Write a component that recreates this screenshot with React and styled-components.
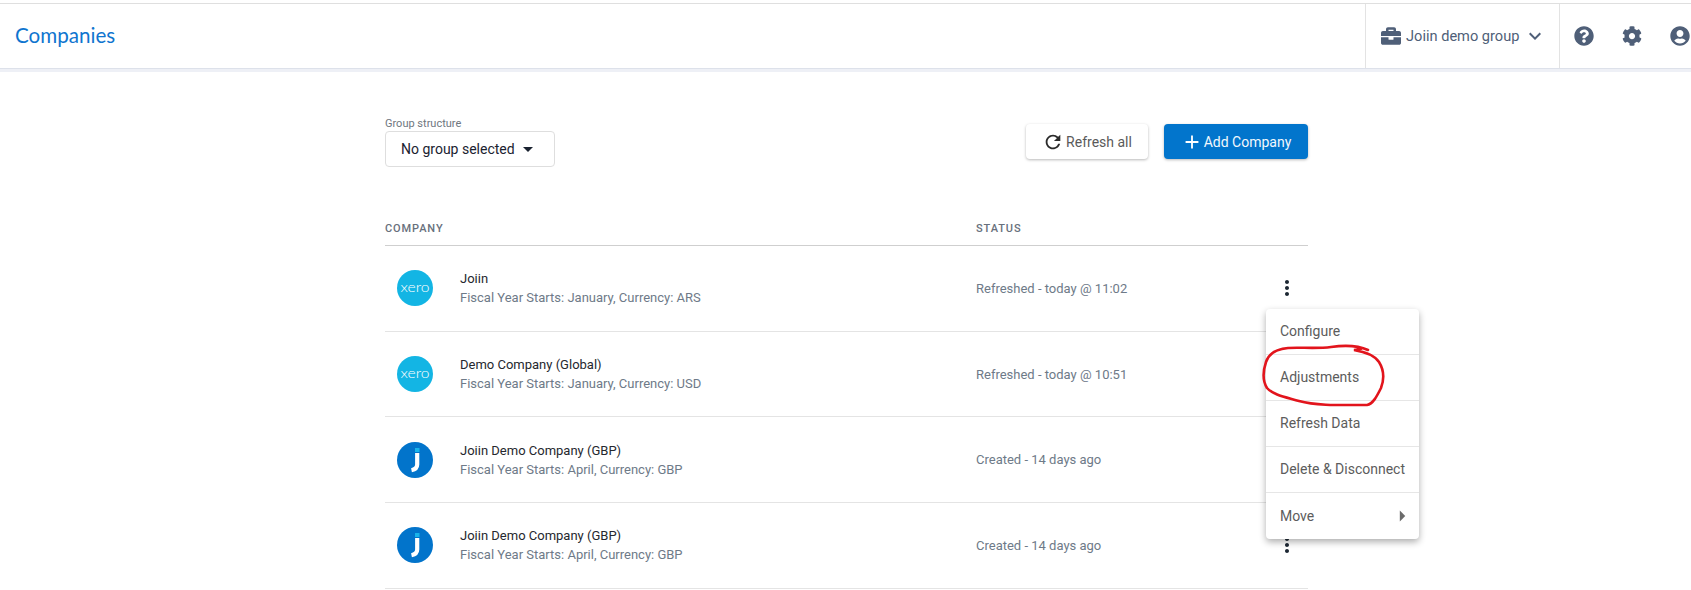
import React from "react";
import styled, { createGlobalStyle } from "styled-components";
import { FaBriefcase, FaQuestionCircle, FaCog, FaUserCircle } from "react-icons/fa";
import { MdRefresh, MdAdd, MdArrowDropDown, MdMoreVert, MdArrowRight, MdKeyboardArrowDown } from "react-icons/md";

const GlobalStyle = createGlobalStyle`
  html, body {
    margin: 0;
    height: 590px;
    overflow: hidden;
    background: #fff;
    font-family: Roboto, "Liberation Sans", sans-serif;
  }
`;

const Page = styled.div`
  height: 590px;
  padding-top: 3px;
  box-sizing: border-box;
  overflow: hidden;
`;

const Header = styled.header`
  height: 66px;
  box-sizing: border-box;
  display: flex;
  align-items: stretch;
  justify-content: space-between;
  border-top: 1px solid #dfdfdf;
  border-bottom: 1px solid #dde1ea;
  box-shadow: 0 3px 0 #eef0f6;
`;

const Title = styled.div`
  display: flex;
  align-items: center;
  padding-left: 15px;
  padding-bottom: 2px;
  font-family: Lato, sans-serif;
  font-size: 20.6px;
  color: #0f75cf;
`;

const HeaderRight = styled.div`
  display: flex;
  align-items: stretch;
`;

const GroupPicker = styled.div`
  width: 195px;
  box-sizing: border-box;
  display: flex;
  align-items: center;
  padding-left: 15px;
  border-left: 1px solid #e3e3e3;
  border-right: 1px solid #e3e3e3;
  color: #4f5f78;
  font-size: 14.6px;

  span {
    margin-left: 5px;
    margin-right: 4px;
  }
`;

const HeaderIcons = styled.div`
  width: 131px;
  display: flex;
  align-items: center;
  gap: 28px;
  padding-left: 14px;
  box-sizing: border-box;
  color: #4f5f78;
`;

const Main = styled.main`
  position: relative;
  width: 923px;
  margin-left: 385px;
`;

const Toolbar = styled.div`
  height: 103px;
  padding-top: 48px;
  box-sizing: border-box;
  display: flex;
  justify-content: space-between;
  align-items: flex-start;
`;

const SelectLabel = styled.div`
  font-size: 11px;
  line-height: 13px;
  color: #6f7780;
  margin-bottom: 1px;
`;

const Select = styled.div`
  width: 170px;
  height: 36px;
  box-sizing: border-box;
  display: flex;
  align-items: center;
  padding-left: 15px;
  border: 1px solid #dedede;
  border-radius: 4px;
  font-size: 14px;
  color: #1a2230;

  svg {
    margin-left: 1px;
  }
`;

const Buttons = styled.div`
  display: flex;
  gap: 16px;
  padding-top: 7px;
`;

const Button = styled.button`
  height: 35px;
  width: ${(p) => p.$width}px;
  display: flex;
  align-items: center;
  justify-content: center;
  gap: ${(p) => (p.$primary ? 1 : 2)}px;
  border: none;
  border-radius: 4px;
  padding: 0;
  font-family: inherit;
  font-size: 14px;
  background: ${(p) => (p.$primary ? "#0275cc" : "#fff")};
  color: ${(p) => (p.$primary ? "#f2f8fd" : "#5a5a5a")};
  box-shadow: 0 1px 3px rgba(0, 0, 0, 0.28);

  svg {
    color: ${(p) => (p.$primary ? "#fff" : "#2b2b2b")};
  }
`;

const TableHead = styled.div`
  height: 74px;
  box-sizing: border-box;
  display: grid;
  grid-template-columns: 591px 1fr;
  align-items: end;
  padding-bottom: 10px;
  border-bottom: 1px solid #cfcfcf;
  font-size: 11px;
  line-height: 13px;
  font-weight: 500;
  letter-spacing: 0.9px;
  color: #68707c;
`;

const Row = styled.div`
  height: 85.7px;
  box-sizing: border-box;
  display: grid;
  grid-template-columns: 75px 516px 1fr 33px;
  align-items: center;
  border-bottom: 1px solid #e4e4e4;
`;

const LogoCell = styled.div`
  padding-left: 12px;
  display: flex;
`;

const CompanyName = styled.div`
  font-size: 13px;
  line-height: 19px;
  color: #25282e;
`;

const CompanySub = styled.div`
  font-size: 13px;
  line-height: 19px;
  color: #6e7a88;
`;

const Status = styled.div`
  font-size: 13px;
  color: #6e7a88;
`;

const Kebab = styled.div`
  display: flex;
  justify-content: flex-start;
  color: #1c2733;
`;

const Menu = styled.div`
  position: absolute;
  left: 881px;
  top: 240px;
  width: 153px;
  background: #fff;
  border-radius: 4px;
  box-shadow: 0 3px 7px rgba(0, 0, 0, 0.32);
`;

const MenuItem = styled.div`
  height: 46px;
  box-sizing: border-box;
  display: flex;
  align-items: center;
  justify-content: space-between;
  padding: 0 9px 1px 14px;
  font-size: 14px;
  color: #5c5c5c;
  border-bottom: ${(p) => (p.$last ? "none" : "1px solid #e6e6e6")};

  svg {
    color: #6b6b6b;
    margin-right: -5px;
  }
`;

const Scribble = styled.svg`
  position: absolute;
  left: -5px;
  top: 35px;
  pointer-events: none;
`;

const XeroLogo = () => (
  <svg width="36" height="36" viewBox="0 0 36 36">
    <circle cx="18" cy="18" r="18" fill="#13b5e4" />
    <text x="18" y="22" textAnchor="middle" textLength="29" lengthAdjust="spacingAndGlyphs" fontFamily="Lato, sans-serif" fontWeight="300" fontSize="14" fill="#fff">xero</text>
  </svg>
);

const JoiinLogo = () => (
  <svg width="36" height="36" viewBox="0 0 36 36">
    <circle cx="18" cy="18" r="18" fill="#0274cb" />
    <rect x="18" y="6" width="4.5" height="4" fill="#19b4ea" />
    <path d="M20.2 11 V22.5 C20.2 26 18 27.5 14.5 28.2" fill="none" stroke="#fff" strokeWidth="4.2" />
  </svg>
);

const companies = [
  { name: "Joiin", sub: "Fiscal Year Starts: January, Currency: ARS", status: "Refreshed - today @ 11:02", logo: "xero" },
  { name: "Demo Company (Global)", sub: "Fiscal Year Starts: January, Currency: USD", status: "Refreshed - today @ 10:51", logo: "xero" },
  { name: "Joiin Demo Company (GBP)", sub: "Fiscal Year Starts: April, Currency: GBP", status: "Created - 14 days ago", logo: "joiin" },
  { name: "Joiin Demo Company (GBP)", sub: "Fiscal Year Starts: April, Currency: GBP", status: "Created - 14 days ago", logo: "joiin" },
];

const menuItems = ["Configure", "Adjustments", "Refresh Data", "Delete & Disconnect"];

export default function App() {
  return (
    <Page>
      <GlobalStyle />
      <Header>
        <Title>Companies</Title>
        <HeaderRight>
          <GroupPicker>
            <FaBriefcase size={20} />
            <span>Joiin demo group</span>
            <MdKeyboardArrowDown size={24} />
          </GroupPicker>
          <HeaderIcons>
            <FaQuestionCircle size={20} />
            <FaCog size={20} />
            <FaUserCircle size={20} />
          </HeaderIcons>
        </HeaderRight>
      </Header>
      <Main>
        <Toolbar>
          <div>
            <SelectLabel>Group structure</SelectLabel>
            <Select>
              No group selected
              <MdArrowDropDown size={24} />
            </Select>
          </div>
          <Buttons>
            <Button $width={122}>
              <MdRefresh size={22} />
              Refresh all
            </Button>
            <Button $width={144} $primary>
              <MdAdd size={22} />
              Add Company
            </Button>
          </Buttons>
        </Toolbar>
        <TableHead>
          <div>COMPANY</div>
          <div>STATUS</div>
        </TableHead>
        {companies.map((c, i) => (
          <Row key={i}>
            <LogoCell>{c.logo === "xero" ? <XeroLogo /> : <JoiinLogo />}</LogoCell>
            <div>
              <CompanyName>{c.name}</CompanyName>
              <CompanySub>{c.sub}</CompanySub>
            </div>
            <Status>{c.status}</Status>
            <Kebab>
              <MdMoreVert size={24} />
            </Kebab>
          </Row>
        ))}
        <Menu>
          {menuItems.map((m) => (
            <MenuItem key={m}>{m}</MenuItem>
          ))}
          <MenuItem $last>
            Move
            <MdArrowRight size={26} />
          </MenuItem>
          <Scribble width="124" height="66" viewBox="0 0 124 66" fill="none">
            <path
              d="M107 6 C96 1 84 1 70 3 C55 5 38 3 27 4 C15 5 8 9 5 18 C2 27 1 36 6 44 C12 51 24 53 38 57 C56 62 82 61 106 61 C112 60 116 52 120 44 C123 36 123 26 118 18 C114 12 105 8 93 6 L100 5"
              stroke="#e2141c"
              strokeWidth="2.6"
              strokeLinecap="round"
            />
          </Scribble>
        </Menu>
      </Main>
    </Page>
  );
}
